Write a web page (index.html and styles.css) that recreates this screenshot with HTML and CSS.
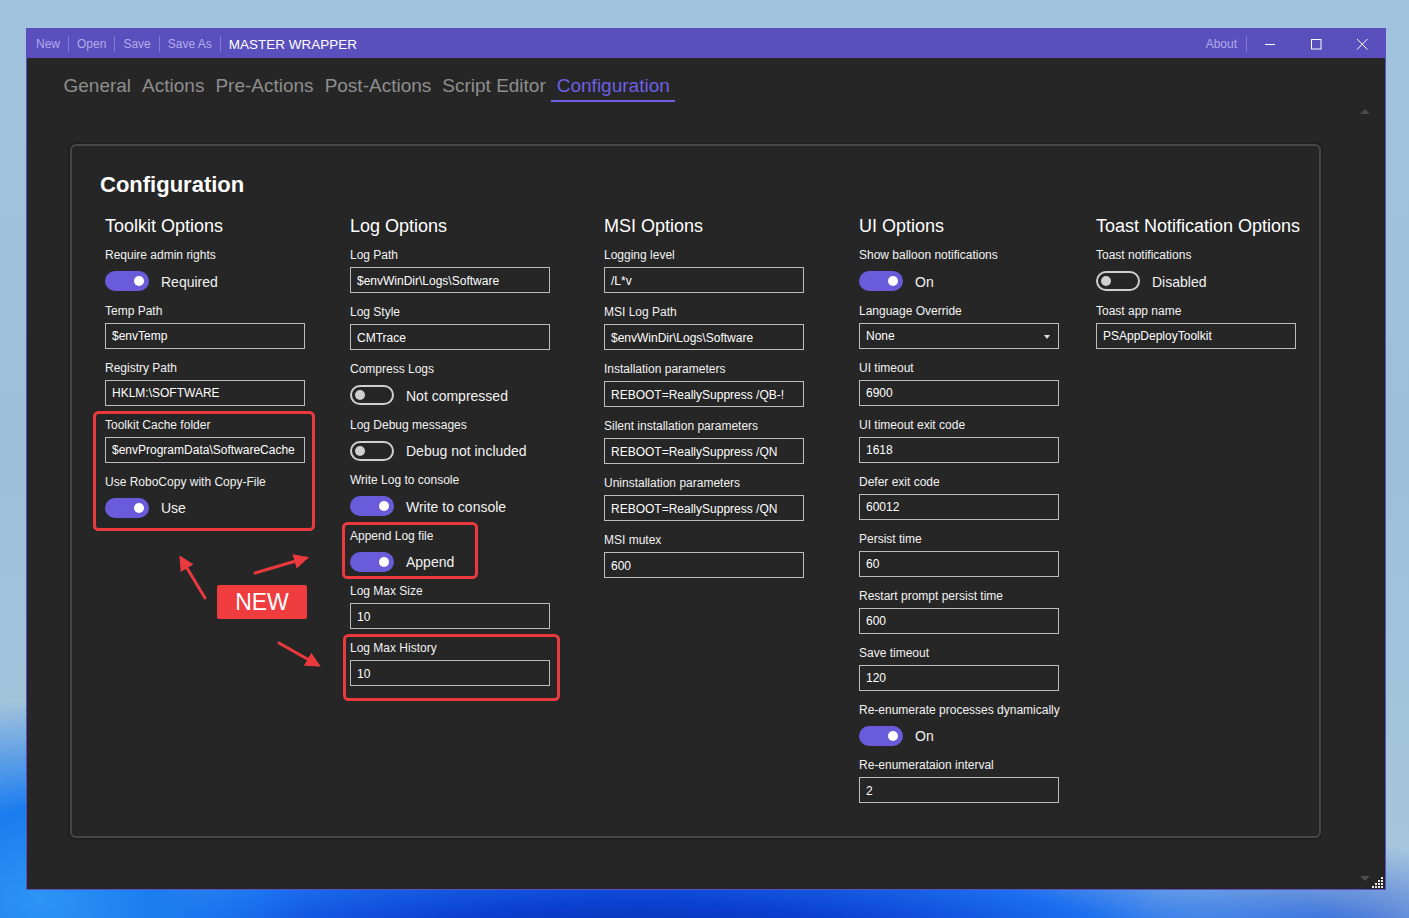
FILE: index.html
```html
<!DOCTYPE html>
<html lang="en">
<head>
<meta charset="utf-8">
<title>MASTER WRAPPER</title>
<link rel="stylesheet" href="styles.css">
</head>
<body>
<div class="desktop">
  <div class="window">
    <header class="titlebar">
      <nav class="menu">
        <span class="menu-item">New</span><span class="sep"></span>
        <span class="menu-item">Open</span><span class="sep"></span>
        <span class="menu-item">Save</span><span class="sep"></span>
        <span class="menu-item">Save As</span><span class="sep"></span>
        <span class="app-title">MASTER WRAPPER</span>
      </nav>
      <div class="title-right">
        <span class="menu-item about">About</span><span class="sep"></span>
        <div class="caption-btns">
          <span class="caption-btn">
            <svg width="12" height="12" viewBox="0 0 12 12"><path d="M1 6.5h10" stroke="#fff" stroke-width="1"/></svg>
          </span>
          <span class="caption-btn">
            <svg width="12" height="12" viewBox="0 0 12 12"><rect x="1.5" y="1.5" width="9.5" height="9.5" fill="none" stroke="#fff" stroke-width="1"/></svg>
          </span>
          <span class="caption-btn">
            <svg width="12" height="12" viewBox="0 0 12 12"><path d="M1 1l10.5 10.5M11.5 1L1 11.5" stroke="#fff" stroke-width="1"/></svg>
          </span>
        </div>
      </div>
    </header>

    <div class="tabs">
      <span class="tab">General</span>
      <span class="tab">Actions</span>
      <span class="tab">Pre-Actions</span>
      <span class="tab">Post-Actions</span>
      <span class="tab">Script Editor</span>
      <span class="tab active">Configuration</span>
    </div>

    <div class="viewer">
      <div class="scroll-content">
        <section class="card">
          <h1 class="card-title">Configuration</h1>
          <div class="cols">

            <div class="col">
              <h2 class="col-title">Toolkit Options</h2>
              <div class="field sw">
                <div class="label">Require admin rights</div>
                <div class="switch-row"><span class="switch on"></span><span class="switch-text">Required</span></div>
              </div>
              <div class="field">
                <div class="label">Temp Path</div>
                <div class="input">$envTemp</div>
              </div>
              <div class="field">
                <div class="label">Registry Path</div>
                <div class="input">HKLM:\SOFTWARE</div>
              </div>
              <div class="field">
                <div class="label">Toolkit Cache folder</div>
                <div class="input">$envProgramData\SoftwareCache</div>
              </div>
              <div class="field sw">
                <div class="label">Use RoboCopy with Copy-File</div>
                <div class="switch-row"><span class="switch on"></span><span class="switch-text">Use</span></div>
              </div>
            </div>

            <div class="col">
              <h2 class="col-title">Log Options</h2>
              <div class="field">
                <div class="label">Log Path</div>
                <div class="input">$envWinDir\Logs\Software</div>
              </div>
              <div class="field">
                <div class="label">Log Style</div>
                <div class="input">CMTrace</div>
              </div>
              <div class="field sw">
                <div class="label">Compress Logs</div>
                <div class="switch-row"><span class="switch off"></span><span class="switch-text">Not compressed</span></div>
              </div>
              <div class="field sw">
                <div class="label">Log Debug messages</div>
                <div class="switch-row"><span class="switch off"></span><span class="switch-text">Debug not included</span></div>
              </div>
              <div class="field sw">
                <div class="label">Write Log to console</div>
                <div class="switch-row"><span class="switch on"></span><span class="switch-text">Write to console</span></div>
              </div>
              <div class="field sw">
                <div class="label">Append Log file</div>
                <div class="switch-row"><span class="switch on"></span><span class="switch-text">Append</span></div>
              </div>
              <div class="field">
                <div class="label">Log Max Size</div>
                <div class="input">10</div>
              </div>
              <div class="field">
                <div class="label">Log Max History</div>
                <div class="input">10</div>
              </div>
            </div>

            <div class="col">
              <h2 class="col-title">MSI Options</h2>
              <div class="field">
                <div class="label">Logging level</div>
                <div class="input">/L*v</div>
              </div>
              <div class="field">
                <div class="label">MSI Log Path</div>
                <div class="input">$envWinDir\Logs\Software</div>
              </div>
              <div class="field">
                <div class="label">Installation parameters</div>
                <div class="input">REBOOT=ReallySuppress /QB-!</div>
              </div>
              <div class="field">
                <div class="label">Silent installation parameters</div>
                <div class="input">REBOOT=ReallySuppress /QN</div>
              </div>
              <div class="field">
                <div class="label">Uninstallation parameters</div>
                <div class="input">REBOOT=ReallySuppress /QN</div>
              </div>
              <div class="field">
                <div class="label">MSI mutex</div>
                <div class="input">600</div>
              </div>
            </div>

            <div class="col">
              <h2 class="col-title">UI Options</h2>
              <div class="field sw">
                <div class="label">Show balloon notifications</div>
                <div class="switch-row"><span class="switch on"></span><span class="switch-text">On</span></div>
              </div>
              <div class="field">
                <div class="label">Language Override</div>
                <div class="input combo">None<span class="combo-arrow"></span></div>
              </div>
              <div class="field">
                <div class="label">UI timeout</div>
                <div class="input">6900</div>
              </div>
              <div class="field">
                <div class="label">UI timeout exit code</div>
                <div class="input">1618</div>
              </div>
              <div class="field">
                <div class="label">Defer exit code</div>
                <div class="input">60012</div>
              </div>
              <div class="field">
                <div class="label">Persist time</div>
                <div class="input">60</div>
              </div>
              <div class="field">
                <div class="label">Restart prompt persist time</div>
                <div class="input">600</div>
              </div>
              <div class="field">
                <div class="label">Save timeout</div>
                <div class="input">120</div>
              </div>
              <div class="field sw">
                <div class="label">Re-enumerate processes dynamically</div>
                <div class="switch-row"><span class="switch on"></span><span class="switch-text">On</span></div>
              </div>
              <div class="field">
                <div class="label">Re-enumerataion interval</div>
                <div class="input">2</div>
              </div>
            </div>

            <div class="col">
              <h2 class="col-title">Toast Notification Options</h2>
              <div class="field sw">
                <div class="label">Toast notifications</div>
                <div class="switch-row"><span class="switch off"></span><span class="switch-text">Disabled</span></div>
              </div>
              <div class="field">
                <div class="label">Toast app name</div>
                <div class="input">PSAppDeployToolkit</div>
              </div>
            </div>

          </div>
        </section>
      </div>
      <div class="scrollbar">
        <span class="arrow-up"></span>
        <span class="arrow-down"></span>
      </div>
    </div>

    <svg class="grip" width="12" height="12" viewBox="0 0 12 12">
      <g fill="#e8e8e8">
        <rect x="9" y="0" width="2" height="2"/>
        <rect x="6" y="3" width="2" height="2"/><rect x="9" y="3" width="2" height="2"/>
        <rect x="3" y="6" width="2" height="2"/><rect x="6" y="6" width="2" height="2"/><rect x="9" y="6" width="2" height="2"/>
        <rect x="0" y="9" width="2" height="2"/><rect x="3" y="9" width="2" height="2"/><rect x="6" y="9" width="2" height="2"/><rect x="9" y="9" width="2" height="2"/>
      </g>
    </svg>
  </div>

  <!-- callout layer: highlight boxes, arrows and the NEW tag -->
  <svg class="callouts" width="1409" height="918" viewBox="0 0 1409 918">
    <defs>
      <marker id="head" viewBox="0 0 10 10" refX="8" refY="5" markerWidth="5" markerHeight="5" orient="auto-start-reverse">
        <path d="M0 0L10 5L0 10z" fill="#ea3a3d"/>
      </marker>
    </defs>
    <g fill="none" stroke="#ea3a3d" stroke-width="3">
      <rect x="94.5" y="412.5" width="219" height="117" rx="4"/>
      <rect x="343.5" y="523.5" width="133" height="54" rx="4"/>
      <rect x="344.5" y="635.5" width="214" height="64" rx="4"/>
    </g>
    <g stroke="#ea3a3d" stroke-width="3" stroke-linecap="round" marker-end="url(#head)">
      <line x1="205" y1="598" x2="181" y2="558"/>
      <line x1="255" y1="573" x2="306" y2="558"/>
      <line x1="279" y1="643" x2="318" y2="665"/>
    </g>
  </svg>
  <div class="new-tag">NEW</div>
</div>
</body>
</html>
```

FILE: styles.css
```css
* { box-sizing: border-box; }

html, body {
  margin: 0;
  padding: 0;
}

body {
  width: 1409px;
  height: 918px;
  overflow: hidden;
  font-family: "Liberation Sans", Arial, sans-serif;
  color: #f2f2f2;
}

/* desktop wallpaper behind the window */
.desktop {
  position: relative;
  width: 1409px;
  height: 918px;
  padding: 28px 0 0 26px;
  background:
    radial-gradient(ellipse 260px 200px at 40px 900px, #2d95f5 0%, #1a7cf0 45%, rgba(40,140,245,0) 100%),
    radial-gradient(ellipse 760px 160px at 640px 960px, #0628a0 0%, #0b3fce 35%, #1c6ff0 65%, rgba(60,150,240,0) 100%),
    radial-gradient(ellipse 200px 120px at 1330px 960px, #1650d8 0%, rgba(60,140,230,0) 100%),
    linear-gradient(180deg, #a2c3dd 0%, #9dbfd9 50%, #a9c7de 100%);
}

.window {
  position: relative;
  width: 1360px;
  height: 862px;
  border: 1px solid #5a4fbd;
  background: #262626;
  display: flex;
  flex-direction: column;
}

/* title bar */
.titlebar {
  height: 29px;
  flex: none;
  background: #5a4fbd;
  display: flex;
  align-items: center;
  justify-content: space-between;
}

.menu {
  display: flex;
  align-items: center;
  gap: 8px;
  padding-left: 9px;
  padding-top: 1px;
}

.menu-item {
  font-size: 12px;
  color: #b2abeb;
}

.sep {
  width: 1px;
  height: 16px;
  background: #8179d2;
}

.app-title {
  font-size: 13.5px;
  color: #ffffff;
}

.title-right {
  display: flex;
  align-items: center;
  height: 100%;
}

.about {
  margin-right: 9px;
  padding-top: 1px;
}

.caption-btns {
  display: flex;
  height: 100%;
}

.caption-btn {
  width: 46px;
  height: 100%;
  display: flex;
  align-items: center;
  justify-content: center;
}

/* page tabs */
.tabs {
  flex: none;
  display: flex;
  padding: 15px 0 1px 31px;
}

.tab {
  font-size: 19px;
  line-height: 25px;
  padding: 0 5.5px 2px;
  color: #8e8e8e;
  border-bottom: 2px solid transparent;
}

.tab.active {
  color: #6d60e2;
  border-bottom-color: #6d60e2;
}

/* scroll viewer */
.viewer {
  flex: 1;
  display: flex;
  min-height: 0;
}

.scroll-content {
  flex: 1;
  padding: 41px 35px 0 43px;
}

.scrollbar {
  width: 18px;
  margin-right: 11px;
  display: flex;
  flex-direction: column;
  justify-content: space-between;
  align-items: center;
  padding: 6px 0 8px;
}

.arrow-up,
.arrow-down {
  width: 0;
  height: 0;
  border-left: 5px solid transparent;
  border-right: 5px solid transparent;
}

.arrow-up { border-bottom: 5px solid #4d4d4d; }
.arrow-down { border-top: 5px solid #4d4d4d; }

.grip {
  position: absolute;
  right: 1px;
  bottom: 0;
}

/* settings card */
.card {
  height: 694px;
  border: 2px solid #474747;
  border-radius: 6px;
  box-shadow: 0 0 2px 1px #1b1b1b;
  padding: 24px 0 0 28px;
}

.card-title {
  margin: 0 0 13px;
  font-size: 22px;
  line-height: 30px;
  font-weight: 700;
  color: #ffffff;
}

.cols {
  display: grid;
  grid-template-columns: 245px 254px 255px 237px 1fr;
  margin-left: 5px;
}

.col-title {
  margin: 0 0 8px;
  font-size: 18px;
  line-height: 26px;
  font-weight: 400;
  color: #ffffff;
  white-space: nowrap;
}

.field {
  margin-bottom: 11px;
}

.field.sw {
  margin-bottom: 7.5px;
}

.label {
  font-size: 12px;
  line-height: 16px;
  color: #f2f2f2;
  margin-bottom: 4px;
  white-space: nowrap;
}

.input {
  position: relative;
  width: 200px;
  height: 26px;
  border: 1px solid #bdbdbd;
  padding: 1px 6px 0;
  display: flex;
  align-items: center;
  font-size: 12px;
  color: #ffffff;
  white-space: nowrap;
}

.combo-arrow {
  position: absolute;
  right: 8px;
  top: 11px;
  width: 0;
  height: 0;
  border-left: 3.5px solid transparent;
  border-right: 3.5px solid transparent;
  border-top: 4px solid #e0e0e0;
}

.switch-row {
  height: 28px;
  display: flex;
  align-items: center;
  gap: 12px;
}

.switch {
  position: relative;
  width: 44px;
  height: 20px;
  border-radius: 10px;
  flex: none;
}

.switch::after {
  content: "";
  position: absolute;
  width: 10px;
  height: 10px;
  border-radius: 50%;
}

.switch.on {
  background: #6a5bdb;
}

.switch.on::after {
  top: 5px;
  right: 5px;
  background: #ffffff;
}

.switch.off {
  border: 2px solid #cfcfcf;
}

.switch.off::after {
  top: 3px;
  left: 3px;
  background: #cfcfcf;
}

.switch-text {
  font-size: 14px;
  color: #f2f2f2;
  padding-top: 1px;
}

/* callout layer */
.callouts {
  position: absolute;
  left: 0;
  top: 0;
  pointer-events: none;
}

.new-tag {
  position: absolute;
  left: 217px;
  top: 585px;
  width: 90px;
  height: 34px;
  background: #ef3d3f;
  border-radius: 2px;
  color: #ffffff;
  font-size: 23px;
  line-height: 34px;
  text-align: center;
}
```
